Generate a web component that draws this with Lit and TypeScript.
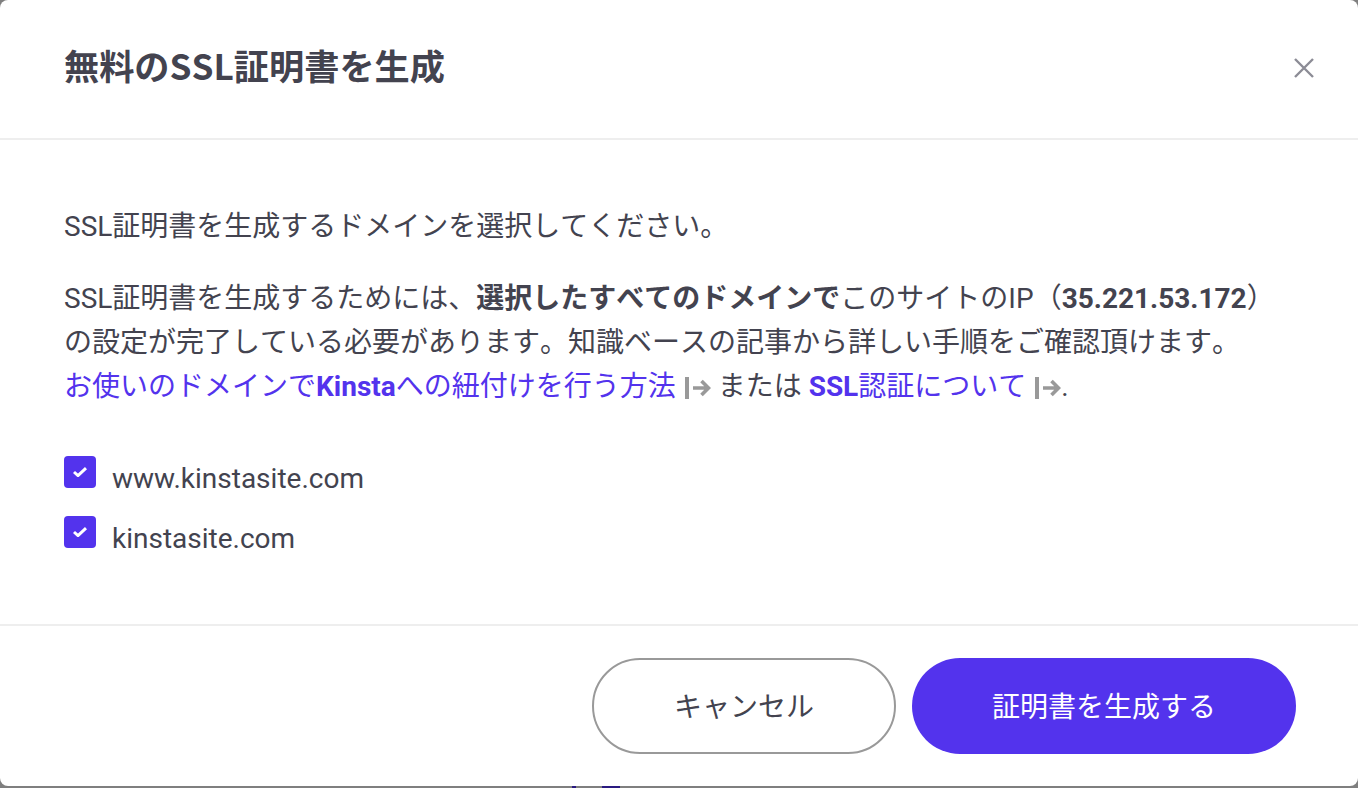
import { LitElement, html, css } from "lit";
import { customElement } from "lit/decorators.js";

const ext = html`<svg class="ext" viewBox="0 0 26 22" width="26" height="22"><path d="M2 0v22" stroke="#999" stroke-width="4" fill="none"/><path d="M8 11h15.5M16.5 4l7 7-7 7" stroke="#999" stroke-width="3.6" fill="none"/></svg>`;
const check = html`<span class="box"><svg viewBox="0 0 14 10" width="14" height="10"><path d="M1 5l4 3.6 8-7.4" stroke="#fff" stroke-width="3" fill="none"/></svg></span>`;

@customElement("app-root")
export class AppRoot extends LitElement {
  static styles = css`
    :host { display: block; position: relative; width: 1358px; height: 788px; overflow: hidden; background: #7f7f7f;
      font-family: Roboto, "Noto Sans CJK JP", sans-serif; color: #43434f; font-kerning: none; }
    .modal { background: #fff; height: 786px; border-radius: 8px; display: flex; flex-direction: column; }
    .head { height: 140px; box-sizing: border-box; border-bottom: 2px solid #eeeeee; display: flex; align-items: center; justify-content: space-between; padding: 0 44px 2px 64px; }
    h1 { margin: 0 0 6px; font-family: "Noto Sans CJK JP", sans-serif; font-size: 35.2px; font-weight: 700; line-height: 40px; color: #43434f; }
    .close { width: 20px; height: 20px; display: block; }
    .body { height: 486px; box-sizing: border-box; border-bottom: 2px solid #eeeeee; padding: 65px 64px 0; font-size: 28px; line-height: 44px; }
    p { margin: 0; }
    .p2 { margin-top: 28px; }
    b { font-weight: 700; }
    a { color: #5333ed; text-decoration: none; }
    .ext { vertical-align: -3px; margin-left: 2px; }
    .checks { margin-top: 48px; display: flex; flex-direction: column; gap: 16px; }
    .row { display: flex; align-items: center; gap: 16px; height: 44px; font-kerning: normal; }
    .box { width: 32px; height: 32px; border-radius: 4px; background: #5333ed; display: flex; align-items: center; justify-content: center; margin-top: -14px; }
    .foot { flex: 1; display: flex; justify-content: flex-end; align-items: flex-start; gap: 16px; padding: 32px 62px 0 0; }
    .btn { box-sizing: border-box; height: 96px; border-radius: 48px; display: flex; align-items: center; justify-content: center; padding-bottom: 3px; font-size: 28px; font-weight: 400; }
    .cancel { width: 304px; border: 2px solid #999; color: #43434f; background: #fff; }
    .go { width: 384px; background: #5333ed; color: #fff; }
    .under { position: absolute; bottom: 0; height: 2px; background: #2a1a80; }
    .u1 { left: 572px; width: 4px; }
    .u2 { left: 602px; width: 18px; }
  `;
  render() {
    return html`<div class="modal">
      <div class="head"><h1>無料のSSL証明書を生成</h1>
        <svg class="close" viewBox="0 0 20 20"><path d="M1 1l18 18M19 1L1 19" stroke="#8c8c96" stroke-width="2.4" fill="none"/></svg></div>
      <div class="body">
        <p>SSL証明書を生成するドメインを選択してください。</p>
        <p class="p2">SSL証明書を生成するためには、<b>選択したすべてのドメインで</b>このサイトのIP（<b>35.221.53.172</b>）<br>の設定が完了している必要があります。知識ベースの記事から詳しい手順をご確認頂けます。<br><a href="#">お使いのドメインで<b>Kinsta</b>への紐付けを行う方法</a> ${ext} または <a href="#"><b>SSL</b>認証について</a> ${ext}.</p>
        <div class="checks">
          <div class="row">${check}<span>www.kinstasite.com</span></div>
          <div class="row">${check}<span>kinstasite.com</span></div>
        </div>
      </div>
      <div class="foot"><div class="btn cancel">キャンセル</div><div class="btn go">証明書を生成する</div></div>
    </div><span class="under u1"></span><span class="under u2"></span>`;
  }
}
